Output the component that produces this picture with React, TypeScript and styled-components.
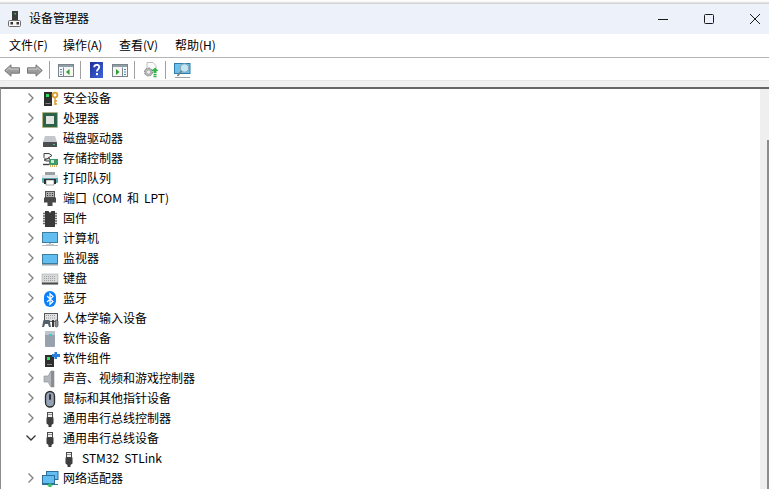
import React from "react";
import styled, { createGlobalStyle } from "styled-components";

const Global = createGlobalStyle`
  html, body { margin: 0; padding: 0; background: #fff; overflow: hidden; }
  body { font-family: "Noto Sans CJK SC", "Liberation Sans", sans-serif; font-size: 12px; color: #000; }
`;

const Win = styled.div`
  width: 769px; height: 489px; display: flex; flex-direction: column; overflow: hidden; background: #fff;
`;
const TopEdge = styled.div`
  height: 4px; flex: none; background: linear-gradient(#ffffff 0, #f4f4f4 2px, #d4d4d4 3px, #d4d4d4 4px);
`;
const TitleBar = styled.div`
  height: 30px; flex: none; background: #edf2fa; display: flex; align-items: center; padding: 0 0 0 8px;
`;
const TitleText = styled.span`
  margin: 0 0 3px 7px; font-size: 12px; color: #000; line-height: 16px;
`;
const WinButtons = styled.div`
  margin-left: auto; display: flex; align-items: center; gap: 36px; padding-right: 9px;
`;
const MenuBar = styled.div`
  height: 21px; flex: none; display: flex; align-items: center; gap: 18px; padding: 0 0 2px 9px; background: #fff;
  border-bottom: 1px solid #b4b4b4;
`;
const MenuItem = styled.span`
  font-size: 12px; line-height: 16px; color: #000; width: 38px; white-space: nowrap;
  &:first-child { width: 36px; }
`;
const ToolBar = styled.div`
  height: 20px; flex: none; display: flex; align-items: center; padding: 2px 0 0 4px; background: #fff;
  border-bottom: 1px solid #e6e6e6;
`;
const ToolSep = styled.div`
  width: 1px; height: 18px; flex: none; background: #a0a0a0; margin: 0 8px 0 6px;
`;
const Gap = styled.div<{ $w: number }>`
  width: ${(p) => p.$w}px; flex: none;
`;
const Strip = styled.div`
  height: 6px; flex: none; background: #f0f0f0;
`;
const Body = styled.div`
  flex: 1; min-height: 0; display: flex; border-top: 2px solid #666; border-left: 1px solid #8c8c8c; background: #fff;
`;
const Tree = styled.div`
  flex: 1; min-width: 0; margin-top: -1px; overflow: hidden;
`;
const Row = styled.div<{ $child?: boolean }>`
  height: 20px; display: flex; align-items: center; padding-left: ${(p) => (p.$child ? 58 : 26)}px;
`;
const Caret = styled.svg`
  width: 8px; height: 10px; flex: none; margin-right: 5px;
`;
const DownCaret = styled.svg`
  width: 10px; height: 10px; flex: none; margin: 0 4px 0 -1px;
`;
const IconBox = styled.div`
  width: 20px; height: 20px; padding-top: 2px; box-sizing: border-box; flex: none;
  display: flex; align-items: flex-start; justify-content: center;
`;
const Label = styled.span`
  margin-left: 3px; font-size: 12px; line-height: 16px; color: #000; white-space: nowrap; word-spacing: 2.3px;
`;
const Scroll = styled.div`
  width: 9px; flex: none; background: #efefef; display: flex; flex-direction: column; align-items: flex-end; padding-top: 51px;
`;
const Thumb = styled.div`
  width: 2px; flex: 1; background: #8c8c8c;
`;

const S = ({ children, w = 18, h = 18 }: { children: React.ReactNode; w?: number; h?: number }) => (
  <svg width={w} height={h} viewBox={`0 0 ${w} ${h}`} style={{ display: "block" }}>{children}</svg>
);

const AppIcon = () => (
  <S w={14} h={17}>
    <rect x="4" y="0" width="6" height="9" fill="#3c3c3c" />
    <rect x="6.500" y="2" width="1.500" height="1.500" fill="#2ecc5a" />
    <rect x=".5" y="9.500" width="12" height="6" rx="1" fill="#f4f4f4" stroke="#6c6c6c" />
    <rect x="2.500" y="11" width="2.500" height="2.500" fill="#333" />
    <rect x="8.500" y="11" width="2.500" height="2.500" fill="#333" />
  </S>
);
const MinI = () => <svg width="10" height="10"><path d="M0 5.500h10" stroke="#1a1a1a" /></svg>;
const MaxI = () => <svg width="10" height="10"><rect x=".5" y=".5" width="9" height="9" rx="1" fill="none" stroke="#1a1a1a" /></svg>;
const CloseI = () => <svg width="10" height="10"><path d="M0 0l10 10M10 0L0 10" stroke="#1a1a1a" /></svg>;

const BackI = ({ flip }: { flip?: boolean }) => (
  <svg width="16" height="13" style={flip ? { transform: "scaleX(-1)" } : undefined}>
    <path d="M.7 6.500L7 .8v3h8.500v5.400H7v3z" fill="#9c9c9c" stroke="#777" />
    <path d="M2.500 6.500L6 3.500v1.600h9" fill="none" stroke="#cfcfcf" />
  </svg>
);
const PanelI = ({ right }: { right?: boolean }) => (
  <svg width="16" height="13">
    <rect x=".5" y=".5" width="15" height="12" fill="#f6f6f6" stroke="#7c8488" />
    <rect x="1" y="1" width="14" height="2" fill="#8fa0ac" />
    {right ? (
      <>
        <path d="M10.500 3.500v9" stroke="#7c8488" />
        <path d="M4 5l3.500 3L4 11z" fill="#2ca02c" />
        <path d="M12 5.500h2M12 8h2M12 10.500h2" stroke="#4a88c8" />
      </>
    ) : (
      <>
        <path d="M5.500 3.500v9" stroke="#7c8488" />
        <path d="M11.500 5L8 8l3.500 3z" fill="#2ca02c" />
        <path d="M2 5.500h2M2 8h2M2 10.500h2" stroke="#4a88c8" />
      </>
    )}
  </svg>
);
const HelpI = () => (
  <svg width="13" height="16">
    <defs>
      <linearGradient id="hg" x1="0" x2="1" y1="0" y2="1">
        <stop offset="0" stopColor="#1d2f9c" />
        <stop offset="1" stopColor="#3f66d8" />
      </linearGradient>
    </defs>
    <rect width="13" height="16" fill="url(#hg)" />
    <path d="M4.200 5.200c0-3.200 5-3.200 5-.2 0 2.200-2.300 2-2.300 4.600" fill="none" stroke="#fff" strokeWidth="1.800" />
    <rect x="6" y="11" width="2" height="2.200" fill="#fff" />
  </svg>
);
const UpdateI = () => (
  <svg width="16" height="16">
    <path d="M4 .5h6l3 3V8H4z" fill="#fafafa" stroke="#c0c0c0" />
    <circle cx="5.500" cy="10" r="4" fill="#b4b4b4" stroke="#8a8a8a" strokeDasharray="2 1" />
    <circle cx="5.500" cy="10" r="1.600" fill="#f0f0f0" />
    <path d="M8.500 9l3.500-3.500L15.500 9h-2v2h-3V9z" fill="#2cb84a" />
    <path d="M10.500 12.500h3M10.500 14.500h3" stroke="#2cb84a" strokeWidth="1.300" />
  </svg>
);
const MonSearchI = () => (
  <svg width="17" height="16">
    <rect x=".5" y="1.500" width="15.500" height="10" fill="#6cc0ea" stroke="#2f7ea8" />
    <path d="M1 15.500h15" stroke="#9aa4a8" />
    <circle cx="10.500" cy="6" r="4.200" fill="#bfe6f6" stroke="#8da0a8" />
    <path d="M7.500 9l-4 5" stroke="#7a7a7a" strokeWidth="1.600" />
  </svg>
);

const Security = () => (
  <S>
    <rect x="3" y="2" width="8" height="14" fill="#2e2e2e" />
    <rect x="5" y="4" width="3" height="3" fill="#2fe060" />
    <rect x="4.500" y="13" width="5" height="1" fill="#888" />
    <circle cx="14" cy="5" r="2.400" fill="none" stroke="#d8a030" strokeWidth="1.800" />
    <path d="M14 7.500V15M14 11h2M14 14h2" stroke="#d8a030" strokeWidth="1.500" />
  </S>
);
const Cpu = () => (
  <S>
    <rect x="1.500" y="2.500" width="15" height="15" fill="#2f6b50" stroke="#c8b060" strokeDasharray="1 1" />
    <rect x="2.500" y="3.500" width="13" height="13" fill="#2c6048" />
    <rect x="5" y="6" width="8" height="8" fill="#e4e4e4" />
  </S>
);
const Disk = () => (
  <S>
    <path d="M4 6h10l2 6H2z" fill="#c4c8cc" />
    <rect x="2" y="12" width="14" height="5" rx=".5" fill="#4a4e52" />
    <rect x="12" y="14" width="2" height="1" fill="#3ad070" />
  </S>
);
const Storage = () => (
  <S>
    <path d="M3 3.500h5l3 2-6 4-2-2z" fill="#f4f4f4" stroke="#404040" />
    <path d="M3 10l5-2 2 3H5z" fill="#d0d0d0" stroke="#404040" />
    <rect x="8" y="9" width="9" height="6" fill="#3d9a6a" />
    <rect x="10" y="10" width="3" height="3" fill="#cfe8d0" />
    <path d="M2 14.500h6" stroke="#404040" strokeWidth="1.400" />
    <path d="M9 16h7" stroke="#d0a030" strokeWidth="1.500" strokeDasharray="1 1" />
  </S>
);
const Printer = () => (
  <S>
    <rect x="4" y="2" width="10" height="3" fill="#9aa0a4" />
    <rect x="1" y="5" width="16" height="8" rx="1" fill="#5ba6b8" />
    <rect x="1" y="5" width="16" height="3" fill="#dfe4e6" />
    <rect x="3" y="9" width="12" height="5" fill="#2e2e2e" />
    <rect x="5" y="10" width="8" height="5" fill="#fff" stroke="#555" strokeWidth=".5" />
  </S>
);
const Port = () => (
  <S>
    <rect x="4.500" y="1.500" width="9" height="6" fill="#b0b0b0" stroke="#555" />
    <path d="M6 3.500h1M8.500 3.500h1M11 3.500h1M6 5.500h1M8.500 5.500h1M11 5.500h1" stroke="#333" />
    <path d="M3 7.500h12v5h-3.500V16h-5v-3.500H3z" fill="#484848" />
  </S>
);
const Firmware = () => (
  <S>
    <path d="M2 3.500h2M2 6h2M2 8.500h2M2 11h2M2 13.500h2M14 3.500h2M14 6h2M14 8.500h2M14 11h2M14 13.500h2" stroke="#666" strokeWidth="1.400" />
    <path d="M4 1h3.500L9 3l1.500-2H14v16H4z" fill="#3a3a3a" />
  </S>
);
const Computer = () => (
  <S w={20} h={18}>
    <rect x="2.500" y="2.500" width="15" height="10" fill="#62bdf0" stroke="#3c7ea0" />
    <path d="M9 13h2v1H9z" fill="#bbb" />
    <rect x="6" y="14" width="8" height="1" fill="#c8ccd0" />
    <rect x="2" y="15" width="16" height="1" fill="#b4bcc2" />
  </S>
);
const Monitor = () => (
  <S w={20} h={18}>
    <rect x="2.500" y="4.500" width="15" height="9" fill="#62bdf0" stroke="#3c7ea0" />
    <rect x="2" y="14" width="16" height="1.500" fill="#9aa4aa" />
  </S>
);
const Keyboard = () => (
  <S w={20} h={18}>
    <rect x="2" y="4" width="16" height="10" fill="#d8dadc" stroke="#a8aaac" strokeWidth=".6" />
    <path d="M4 6.500h12M4 8.500h12M4 10.500h12" stroke="#a0a2a4" strokeDasharray="1 1" />
    <rect x="2" y="12.500" width="16" height="2" fill="#4a4a4a" />
  </S>
);
const Bluetooth = () => (
  <S>
    <rect x="3" y="1" width="12" height="16" rx="6" fill="#0a7ffb" />
    <path d="M6 6l6 5.500-3 2.800V3.700l3 2.800L6 12" fill="none" stroke="#fff" strokeWidth="1.200" />
  </S>
);
const Hid = () => (
  <S w={20} h={18}>
    <rect x="4.500" y="3.500" width="13" height="8" fill="#e0e2e4" stroke="#555" />
    <path d="M6 5.500h10M6 8h10" stroke="#999" strokeDasharray="1 1" />
    <path d="M2 17l1.500-7h6L11 17H9l-1-3H5l-1 3z" fill="#52606c" />
    <rect x="12" y="10" width="2" height="7" fill="#3a3a3a" />
    <rect x="15" y="10" width="3" height="7" rx="1.500" fill="#8a929a" stroke="#333" strokeWidth=".6" />
  </S>
);
const SoftDev = () => (
  <S>
    <rect x="4" y="1" width="10" height="16" rx="1" fill="#98a2ac" />
    <rect x="4" y="1" width="10" height="4" rx="1" fill="#bcc4cc" />
    <rect x="8" y="4" width="3" height="2" fill="#38c8d8" />
  </S>
);
const SoftComp = () => (
  <S w={20} h={18}>
    <rect x="5" y="5" width="9" height="12" fill="#2e2e2e" />
    <rect x="7" y="7" width="3" height="3" fill="#2fe060" />
    <rect x="7" y="14" width="5" height="1" fill="#888" />
    <path d="M12 4h2.500V2H17v2h3v3h-3v2h-2.500V7H12z" fill="#2a80d8" />
  </S>
);
const Speaker = () => (
  <S>
    <path d="M3 6h4l3-5h3v16h-3l-3-5H3z" fill="#b4b8bc" stroke="#888c90" strokeWidth=".6" />
    <rect x="10" y="1" width="3" height="16" fill="#8a8e92" />
  </S>
);
const Mouse = () => (
  <S>
    <rect x="4.500" y="1.500" width="9" height="15.500" rx="4.500" fill="#93a2b4" stroke="#2b2b2b" strokeWidth="1.300" />
    <rect x="8" y="4" width="2" height="6" rx="1" fill="#333" />
  </S>
);
const Usb = () => (
  <S>
    <rect x="6.500" y="2.500" width="5" height="5" fill="#f0f0f0" stroke="#4a4a4a" />
    <path d="M7.500 4.500h1M9.500 4.500h1" stroke="#333" />
    <path d="M5.500 7.500h7v6l-2 1.500V17h-3v-2l-2-1.500z" fill="#3e3e3e" />
  </S>
);
const Network = () => (
  <S w={20} h={18}>
    <rect x="6.500" y="1.500" width="11.500" height="8" fill="#62bdf0" stroke="#2f6f9c" />
    <rect x="2.500" y="5.500" width="12" height="8" fill="#62bdf0" stroke="#2f6f9c" />
    <path d="M2 14.500h16" stroke="#2f6f9c" />
    <path d="M10 13l3 2.500h-1.500V17h-3v-1.500H7z" fill="#30c060" />
  </S>
);

const CaretRight = () => (
  <Caret viewBox="0 0 8 10"><path d="M1.500 .5L6 5 1.500 9.500" fill="none" stroke="#808080" strokeWidth="1.300" /></Caret>
);
const CaretDown = () => (
  <DownCaret viewBox="0 0 10 10"><path d="M.5 2.500L5 7l4.500-4.500" fill="none" stroke="#333" strokeWidth="1.300" /></DownCaret>
);

const items: [string, React.FC, boolean?][] = [
  ["安全设备", Security],
  ["处理器", Cpu],
  ["磁盘驱动器", Disk],
  ["存储控制器", Storage],
  ["打印队列", Printer],
  ["端口 (COM 和 LPT)", Port],
  ["固件", Firmware],
  ["计算机", Computer],
  ["监视器", Monitor],
  ["键盘", Keyboard],
  ["蓝牙", Bluetooth],
  ["人体学输入设备", Hid],
  ["软件设备", SoftDev],
  ["软件组件", SoftComp],
  ["声音、视频和游戏控制器", Speaker],
  ["鼠标和其他指针设备", Mouse],
  ["通用串行总线控制器", Usb],
  ["通用串行总线设备", Usb, true],
];

export default function App() {
  return (
    <Win>
      <Global />
      <TopEdge />
      <TitleBar>
        <AppIcon />
        <TitleText>设备管理器</TitleText>
        <WinButtons>
          <MinI />
          <MaxI />
          <CloseI />
        </WinButtons>
      </TitleBar>
      <MenuBar>
        <MenuItem>文件(F)</MenuItem>
        <MenuItem>操作(A)</MenuItem>
        <MenuItem>查看(V)</MenuItem>
        <MenuItem>帮助(H)</MenuItem>
      </MenuBar>
      <ToolBar>
        <BackI />
        <Gap $w={7} />
        <BackI flip />
        <ToolSep />
        <PanelI />
        <ToolSep />
        <Gap $w={1} />
        <HelpI />
        <Gap $w={9} />
        <PanelI right />
        <ToolSep />
        <UpdateI />
        <ToolSep />
        <MonSearchI />
      </ToolBar>
      <Strip />
      <Body>
        <Tree>
          {items.map(([label, Icon, open]) => (
            <Row key={label}>
              {open ? <CaretDown /> : <CaretRight />}
              <IconBox><Icon /></IconBox>
              <Label>{label}</Label>
            </Row>
          ))}
          <Row $child>
            <IconBox><Usb /></IconBox>
            <Label>STM32 STLink</Label>
          </Row>
          <Row>
            <CaretRight />
            <IconBox><Network /></IconBox>
            <Label>网络适配器</Label>
          </Row>
        </Tree>
        <Scroll><Thumb /></Scroll>
      </Body>
    </Win>
  );
}
